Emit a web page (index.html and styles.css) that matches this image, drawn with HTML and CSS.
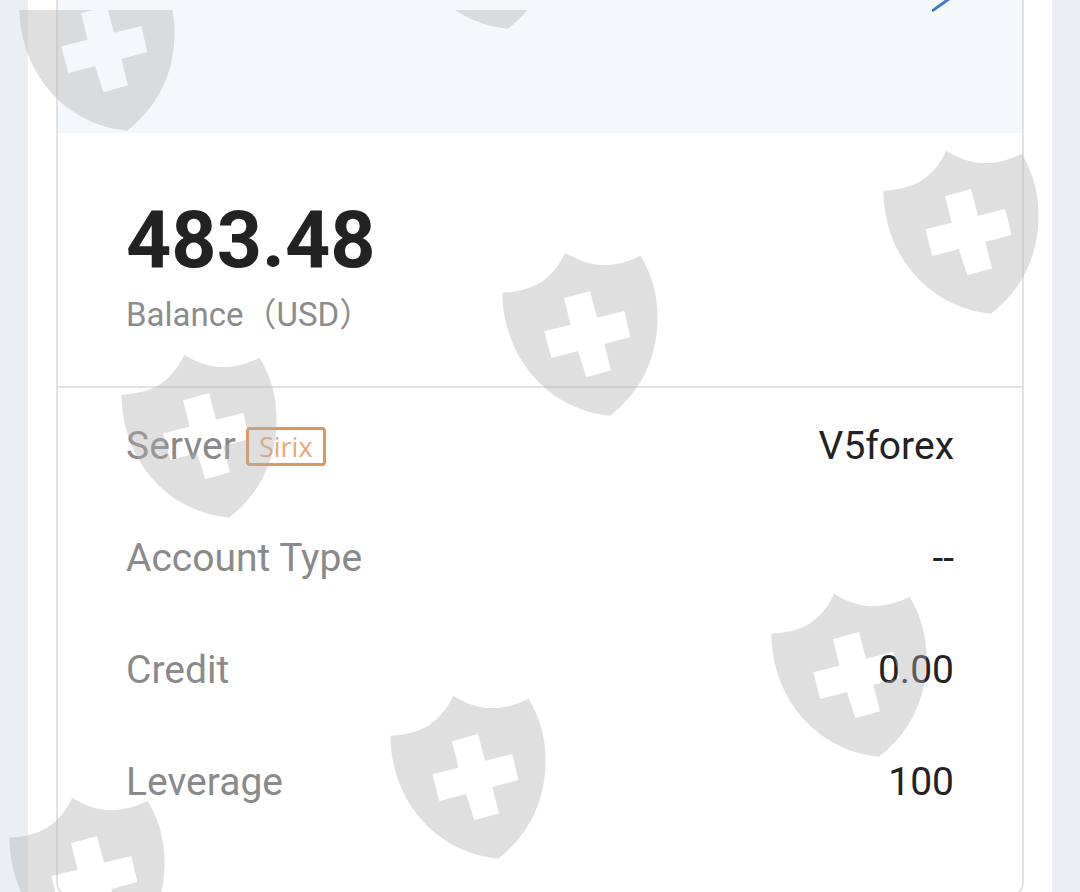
FILE: index.html
```html
<!DOCTYPE html>
<html lang="en">
  <head>
    <meta charset="UTF-8" />
    <meta name="viewport" content="width=device-width, initial-scale=1.0" />
    <title>Account Details</title>
    <link rel="stylesheet" href="styles.css">
  </head>
  <body>
    <main class="page">
      <section class="card">
        <div class="card-header">
          <svg class="arrow" viewBox="0 0 20 12" aria-hidden="true">
            <path d="M0 11 L19 -2.5" />
          </svg>
        </div>
        <div class="balance">
          <div class="amount">483.48</div>
          <div class="caption">Balance（USD）</div>
        </div>
        <dl class="details">
          <div class="row">
            <dt>Server <span class="tag">Sirix</span></dt>
            <dd>V5forex</dd>
          </div>
          <div class="row">
            <dt>Account Type</dt>
            <dd>--</dd>
          </div>
          <div class="row">
            <dt>Credit</dt>
            <dd>0.00</dd>
          </div>
          <div class="row">
            <dt>Leverage</dt>
            <dd>100</dd>
          </div>
        </dl>
      </section>
    </main>

    <!-- shield watermark over the whole page -->
    <svg class="watermark" aria-hidden="true">
      <defs>
        <symbol id="shield" viewBox="0 0 540 570">
          <path fill-rule="evenodd" d="M37 158 C130 153 185 122 226 38 C298 84 370 88 452 47 C494 118 508 190 501 270 C491 380 439 466 360 527 C180 510 40 360 37 158 Z M222 175 L242 254 L163 274 L184 354 L264 333 L289 412 L363 391 L343 312 L421 291 L403 213 L321 233 L300 153 Z" />
        </symbol>
      </defs>
      <use href="#shield" x="7" y="-55" width="180" height="190" />
      <use href="#shield" x="388" y="-157" width="180" height="190" />
      <use href="#shield" x="871" y="128" width="180" height="190" />
      <use href="#shield" x="490" y="230" width="180" height="190" />
      <use href="#shield" x="109" y="332" width="180" height="190" />
      <use href="#shield" x="759" y="571" width="180" height="190" />
      <use href="#shield" x="378" y="673" width="180" height="190" />
      <use href="#shield" x="-3" y="775" width="180" height="190" />
    </svg>
  </body>
</html>
```
FILE: styles.css
```css
* {
  box-sizing: border-box;
}
body {
  position: relative;
  margin: 0;
  padding: 0 28px;
  background-color: #ebeff3;
  font-family: Roboto, "Noto Sans CJK SC", sans-serif;
  color: #222;
  overflow: hidden;
}
.page {
  padding: 0 28px 28px;
  background-color: #fff;
}
.card {
  border: 2px solid #e2e2e2;
  border-top: none;
  border-radius: 0 0 16px 16px;
}
.card-header {
  display: flex;
  justify-content: flex-end;
  height: 133px;
  padding-right: 70px;
  background-color: #f4f8fb;
}
.arrow {
  width: 20px;
  height: 12px;
  fill: none;
  stroke: #3f7cc8;
  stroke-width: 3;
}
.balance {
  padding: 59px 68px 44px;
  border-bottom: 2px solid #e2e2e2;
}
.amount {
  font-size: 79px;
  font-weight: bold;
  line-height: 96px;
}
.caption {
  font-size: 33px;
  line-height: 54px;
  color: #8c8c8c;
}
.details {
  margin: 0;
  padding: 2px 68px 58px;
}
.row {
  display: flex;
  justify-content: space-between;
  align-items: center;
  height: 112px;
  font-size: 39px;
}
.row dt {
  display: flex;
  align-items: center;
  gap: 10px;
  color: #8a8a8a;
}
.row dd {
  margin: 0;
}
.tag {
  padding: 0 10px;
  border: 3px solid #dc965a;
  border-radius: 4px;
  font-family: "Open Sans", sans-serif;
  font-size: 27px;
  line-height: 33px;
  color: #e8a878;
}
.watermark {
  position: absolute;
  top: 10px;
  left: 0;
  width: 100%;
  height: 100%;
  fill: #b1b1b1;
  opacity: 0.4;
  pointer-events: none;
}
```
